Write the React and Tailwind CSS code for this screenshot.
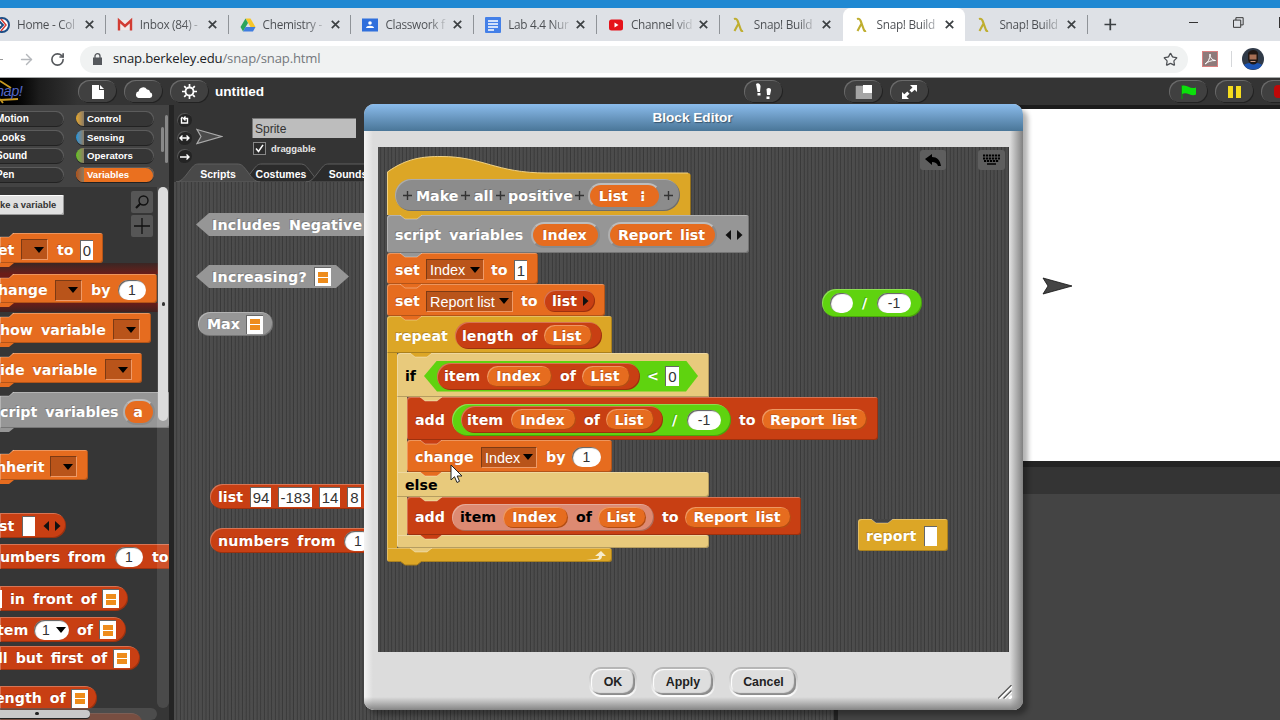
import clsx from "clsx";
import { Star, RotateCw, ArrowRight } from "lucide-react";

const stripes =
  "bg-[repeating-linear-gradient(90deg,#4d4d4d_0,#4b4b4b_2px,#393939_2.7px,#3e3e3e_3.1px,#4d4d4d_3.65px)]";
const bevel =
  "shadow-[inset_1px_1px_0_rgba(255,255,255,0.28),inset_-1px_-1px_0_rgba(0,0,0,0.22)]";

/* ---------- block parts ---------- */

function Word({ className, dark, children }) {
  return (
    <span
      className={clsx(
        "shrink-0 whitespace-nowrap font-['DejaVu_Sans',sans-serif] text-[14.2px] leading-[16px] font-bold [word-spacing:3px]",
        dark ? "text-black" : "text-white [text-shadow:-1px_-1px_0_rgba(0,0,0,0.18)]",
        className
      )}
    >
      {children}
    </span>
  );
}

function Var({ className, ring, children }) {
  return (
    <span
      className={clsx(
        "flex shrink-0 items-center rounded-full bg-[#e66c1f] pr-[2px]",
        ring
          ? "h-[26px] border-[2px] border-[#8a8a8a] border-t-[#bdbdbd] border-l-[#b0b0b0]"
          : "h-[21px] shadow-[inset_1px_1px_0_rgba(255,255,255,0.3),inset_-1px_-1px_0_rgba(100,30,0,0.4)]",
        className
      )}
    >
      <Word className="mx-auto">{children}</Word>
    </span>
  );
}

function Pill({ className, children }) {
  return <span className={clsx("flex shrink-0 items-center rounded-full", bevel, className)}>{children}</span>;
}

function Num({ className, children }) {
  return (
    <span
      className={clsx(
        "flex h-[20px] shrink-0 items-center justify-center rounded-full bg-white font-['Liberation_Sans',sans-serif] text-[14px] leading-none text-[#333] shadow-[inset_1px_1px_1px_rgba(0,0,0,0.65)]",
        className
      )}
    >
      {children}
    </span>
  );
}

function Slot({ className, children }) {
  return (
    <span
      className={clsx(
        "flex h-[20px] shrink-0 items-center justify-center border-t border-l border-black/60 bg-white font-['Liberation_Sans',sans-serif] text-[15px] leading-none text-[#333]",
        className
      )}
    >
      {children}
    </span>
  );
}

function Down() {
  return (
    <svg className="mr-[3px] ml-auto h-[6px] w-[10px] shrink-0" viewBox="0 0 10 6">
      <path d="M0 0h10L5 6z" fill="#000" />
    </svg>
  );
}

function Dropdown({ className, children }) {
  return (
    <span
      className={clsx(
        "flex h-[21px] shrink-0 items-center border border-t-[#7c3a14] border-r-[#ee9a68] border-b-[#ee9a68] border-l-[#7c3a14] bg-[#b9541a] pl-[3px] font-['Liberation_Sans',sans-serif] text-[14.4px] leading-none text-white",
        className
      )}
    >
      <span className="pt-[2px] whitespace-nowrap">{children}</span>
      <Down />
    </span>
  );
}

function ListSlot({ className }) {
  return (
    <span
      className={clsx(
        "flex h-[19px] w-[17px] shrink-0 flex-col items-center justify-center gap-px border-t border-l border-black/60 bg-white",
        className
      )}
    >
      <i className="h-[5px] w-[10px] bg-[#ee8c1c]" />
      <i className="h-[5px] w-[10px] bg-[#ee8c1c]" />
    </span>
  );
}

function Arrows({ className, single }) {
  return (
    <svg className={clsx("h-[10px] w-[18px] shrink-0", className)} viewBox="0 0 18 10">
      {!single && <path d="M6 0v10L0.500 5z" fill="#111" />}
      <path d={single ? "M0 0v10l5.500-5z" : "M12 0v10l5.500-5z"} fill="#111" />
    </svg>
  );
}

// the tab of the block above, hanging into the top of the next one
function Tab({ fill, edge = "rgba(255,255,255,0.35)", className }) {
  return (
    <svg className={clsx("absolute h-[6px] w-[22px]", className || "top-0 left-[13px]")} viewBox="0 0 22 6">
      <path d="M0 0h22l-5 4H5z" fill={fill} />
      <path d="M0 0l5 4h12l5-4" fill="none" stroke={edge} strokeWidth="1" />
    </svg>
  );
}

function Row({ className, children }) {
  return (
    <div className={clsx("relative flex shrink-0 items-center rounded-[3px] pt-[2px] pl-[8px]", bevel, className)}>
      {children}
    </div>
  );
}

/* ---------- browser ---------- */

function Lambda() {
  return (
    <svg className="h-[16px] w-[16px]" viewBox="0 0 16 16">
      <path d="M3 2c2-.8 3 .2 3.700 2l3.300 9c.4 1 1 1.200 2 .7M7.500 6.500L3.500 14" fill="none" stroke="#bfae30" strokeWidth="2.100" />
    </svg>
  );
}

const favicons = {
  home: (
    <svg className="h-[16px] w-[16px]" viewBox="0 0 16 16">
      <circle cx="8" cy="8" r="7" fill="#fff" stroke="#1d4e86" strokeWidth="2" />
      <path d="M7 2l5 6-5 6" fill="none" stroke="#d43c34" strokeWidth="1.500" />
      <path d="M4 3l5 5-5 5" fill="none" stroke="#1d4e86" strokeWidth="2" />
    </svg>
  ),
  gmail: (
    <svg className="h-[16px] w-[16px]" viewBox="0 0 16 16">
      <path d="M2 3h12v10H2z" fill="#f1e9e8" />
      <path d="M2 13.500V3.500l6 5.500 6-5.500v10" fill="none" stroke="#d23c32" strokeWidth="2.400" />
    </svg>
  ),
  drive: (
    <svg className="h-[16px] w-[16px]" viewBox="0 0 16 16">
      <path d="M5.500 1.500h5L15.500 10h-5z" fill="#f6c62b" />
      <path d="M5.500 1.500L8 6 3 14.500.5 10z" fill="#2ba45c" />
      <path d="M5.500 10h10L13 14.500H3z" fill="#3f7de0" />
    </svg>
  ),
  classroom: (
    <svg className="h-[16px] w-[16px]" viewBox="0 0 16 16">
      <path d="M0 1.500h16v13H0z" fill="#2f6fdc" />
      <circle cx="8" cy="6" r="1.800" fill="#fff" />
      <path d="M4 11c0-3 8-3 8 0z" fill="#fff" />
    </svg>
  ),
  docs: (
    <svg className="h-[16px] w-[16px]" viewBox="0 0 16 16">
      <rect width="16" height="16" rx="1" fill="#4480e8" />
      <path d="M3 4h10M3 7h10M3 10h10M3 13h6" stroke="#fff" strokeWidth="1.500" />
    </svg>
  ),
  youtube: (
    <svg className="h-[16px] w-[16px]" viewBox="0 0 16 16">
      <rect x="1" y="2.500" width="14" height="11" rx="2.500" fill="#e5131a" />
      <path d="M6.500 5.500v5l4-2.500z" fill="#fff" />
    </svg>
  ),
  snap: <Lambda />,
};

const tabs = [
  { icon: "home", title: "Home - Col" },
  { icon: "gmail", title: "Inbox (84) -" },
  { icon: "drive", title: "Chemistry -" },
  { icon: "classroom", title: "Classwork f" },
  { icon: "docs", title: "Lab 4.4 Nur" },
  { icon: "youtube", title: "Channel vid" },
  { icon: "snap", title: "Snap! Build" },
  { icon: "snap", title: "Snap! Build", active: true },
  { icon: "snap", title: "Snap! Build" },
];

function ChromeTab({ tab, sep }) {
  return (
    <div className={clsx("flex h-[33px] w-[122.800px] shrink-0 items-center", tab.active && "rounded-t-[8px] bg-white")}>
      <span className="ml-[11px] shrink-0">{favicons[tab.icon]}</span>
      <span className="ml-[7px] w-[61px] overflow-hidden bg-linear-to-r from-[#4a4d51] from-70% to-[#c5c8cc] bg-clip-text font-['Open_Sans',sans-serif] text-[11.800px] tracking-[-0.3px] whitespace-nowrap text-transparent">
        {tab.title}
      </span>
      <svg className="ml-[7px] h-[9px] w-[9px] shrink-0" viewBox="0 0 9 9">
        <path d="M0.800 0.800l7.400 7.400M8.200 0.800L0.800 8.200" stroke="#3c4043" strokeWidth="1.700" />
      </svg>
      {sep && <i className="ml-auto h-[19px] w-px bg-[#8f9398]" />}
    </div>
  );
}

function Chrome() {
  return (
    <div className="shrink-0">
      <div className="h-[8px] bg-[#1f88d2]" />
      <div className="flex h-[33px] items-center bg-[#dee1e6]">
        <div className="-ml-[17px] flex">
          {tabs.map((t, i) => (
            <ChromeTab key={i} tab={t} sep={i !== 6 && i !== 7} />
          ))}
        </div>
        <svg className="ml-[16px] h-[13px] w-[13px]" viewBox="0 0 13 13">
          <path d="M6.500 0.500v12M0.500 6.500h12" stroke="#3c4043" strokeWidth="1.800" />
        </svg>
        <i className="mb-[4px] ml-[72px] h-px w-[10px] bg-[#333]" />
        <svg className="mb-[5px] ml-[35px] h-[11px] w-[11px]" viewBox="0 0 11 11" fill="none" stroke="#333">
          <path d="M.5 3h7.500v7.500H.5zM3 3V.5h7.500V8H8" />
        </svg>
        <i className="mb-[5px] ml-[35px] h-[11px] w-px bg-[#333]" />
      </div>
      <div className="flex h-[36px] items-center bg-white">
        <i className="h-px w-[3px] bg-[#999]" />
        <ArrowRight className="ml-[15px] text-[#b4b7bb]" size={17} strokeWidth={2} />
        <RotateCw className="ml-[15px] text-[#55585c]" size={15} strokeWidth={2.600} />
        <div className="ml-[15px] flex h-[27px] w-[1108px] items-center rounded-full bg-[#f0f2f2] pl-[13px] font-['Open_Sans',sans-serif] text-[13.100px] tracking-[-0.15px] text-[#202124]">
          <svg className="mr-[11px] h-[12px] w-[9px]" viewBox="0 0 9 12">
            <path d="M0 4.500h9V12H0z" fill="#55585c" />
            <path d="M2 5V3a2.500 2.300 0 0 1 5 0v2" fill="none" stroke="#55585c" strokeWidth="1.300" />
          </svg>
          snap.berkeley.edu<span className="text-[#74787c]">/snap/snap.html</span>
          <Star size={15} className="mr-[10px] ml-auto text-[#4d5054]" />
        </div>
        <div className="ml-[14px] flex h-[16px] w-[16px] items-center justify-center border border-[#d98080] bg-[#8e7a7a]">
          <svg className="h-[12px] w-[12px]" viewBox="0 0 12 12">
            <path d="M1 11c3-1.500 5-5 5-10 0 4 2 6 5.500 6.500C7 7.500 4 8.500 1 11z" fill="none" stroke="#fff" />
          </svg>
        </div>
        <i className="ml-[13px] h-[16px] w-px bg-[#d5d7da]" />
        <svg className="ml-[10px] h-[22px] w-[22px]" viewBox="0 0 22 22">
          <circle cx="11" cy="11" r="11" fill="#303a48" />
          <path d="M2 17c3-3 15-3 18 0-3 6-15 6-18 0z" fill="#1c55b5" />
          <path d="M6 5c2-4 9-4 10 0v7c-1 6-8 6-10 0z" fill="#211815" />
          <path d="M7.500 6.500h7v5h-7z" fill="#a86f55" />
          <path d="M8.500 13.500h5" stroke="#c79a86" />
        </svg>
      </div>
      <div className="h-px bg-[#a5a8a8]" />
    </div>
  );
}

/* ---------- Snap! IDE ---------- */

function BarButton({ className, children }) {
  return (
    <div
      className={clsx(
        "flex h-[23px] w-[39px] shrink-0 items-center justify-center rounded-full bg-[#404040] shadow-[inset_1px_1px_0_#6a6a6a,inset_-1px_-1px_0_#222]",
        className
      )}
    >
      {children}
    </div>
  );
}

function ControlBar() {
  return (
    <div className="flex h-[27px] shrink-0 items-center bg-[#343434]">
      <div className="flex h-full w-[78px] shrink-0 items-center bg-linear-to-r from-black via-[#1c1c1c] to-[#343434]">
        <svg className="h-[27px] w-[24px]" viewBox="0 0 24 27">
          <path d="M0 3l11 7M0 22l18-1M3 25l-3-4" fill="none" stroke="#c99a22" strokeWidth="1.800" />
          <text x="-4" y="18" fontSize="14.500" fontFamily="Liberation Sans" fontStyle="italic" letterSpacing="-0.500" fill="#5367c4">
            nap!
          </text>
        </svg>
      </div>
      <BarButton>
        <svg className="h-[14px] w-[12px]" viewBox="0 0 12 14">
          <path d="M0 0h7v5h5v9H0zM8 0l4 4H8z" fill="#fff" />
        </svg>
      </BarButton>
      <BarButton className="ml-[7px]">
        <svg className="h-[12px] w-[18px]" viewBox="0 0 18 12">
          <path d="M3.500 12a3.500 3.500 0 0 1 .2-6.800A4.500 4.500 0 0 1 12 3.500 3 3 0 0 1 15 6.300 2.900 2.900 0 0 1 14.800 12z" fill="#fff" />
        </svg>
      </BarButton>
      <BarButton className="ml-[7px]">
        <svg className="h-[15px] w-[15px]" viewBox="0 0 15 15" fill="none" stroke="#fff">
          <circle cx="7.500" cy="7.500" r="4" strokeWidth="1.800" />
          <path d="M7.500 0v3M7.500 12v3M0 7.500h3M12 7.500h3M2.200 2.200l2 2M10.800 10.800l2 2M2.200 12.800l2-2M10.800 4.200l2-2" strokeWidth="1.700" />
        </svg>
      </BarButton>
      <span className="ml-[6px] w-[52px] shrink-0 pt-[2px] font-['Liberation_Sans',sans-serif] text-[13.600px] font-bold text-white">untitled</span>
      <BarButton className="ml-[477px]">
        <svg className="h-[17px] w-[18px]" viewBox="0 0 18 17" fill="#fff">
          <path d="M1 1c2-2 5 0 4.500 3L5 9H2.500zM2.500 10h3v2.500h-3zM11.500 6c2-2 5-1 4.500 1.500L15 12h-3zM11.500 13.500h3V16h-3z" />
        </svg>
      </BarButton>
      <BarButton className="ml-[61px]">
        <svg className="h-[14px] w-[17px]" viewBox="0 0 17 14">
          <path d="M0 0h17v14H0z" fill="#a5a5a5" />
          <path d="M8 0h9v8H8z" fill="#fff" />
          <path d="M0 14V0h8" fill="none" stroke="#111" />
        </svg>
      </BarButton>
      <BarButton className="ml-[7px]">
        <svg className="h-[14px] w-[15px]" viewBox="0 0 15 14" fill="#fff">
          <path d="M8 0h7v7l-2.300-2.200-3 2.700L7.500 5.200l3-2.800zM7 14H0V7l2.300 2.200 3-2.700 2.200 2.300-3 2.800z" />
        </svg>
      </BarButton>
      <BarButton className="ml-[240px]">
        <svg className="h-[14px] w-[16px]" viewBox="0 0 16 14">
          <path d="M1 0v14" stroke="#00a000" />
          <path d="M1 1c5-2 8 4 14 1.500v7C10 12 6 6 1 9z" fill="#0be00b" />
        </svg>
      </BarButton>
      <BarButton className="ml-[7px]">
        <i className="h-[12px] w-[5px] bg-[#f5dc1e]" />
        <i className="ml-[3px] h-[12px] w-[5px] bg-[#f5dc1e]" />
      </BarButton>
      <BarButton className="ml-[7px]">
        <i className="h-[13px] w-[13px] rounded-[4px] bg-[#c00808]" />
      </BarButton>
    </div>
  );
}

const leftCats = ["Motion", "Looks", "Sound", "Pen"];
const rightCats = [
  { name: "Control", edge: "from-[#e6a822]" },
  { name: "Sensing", edge: "from-[#0494dc]" },
  { name: "Operators", edge: "from-[#62c213]" },
  { name: "Variables", edge: "from-[#a85018]", active: true },
];

function Categories() {
  return (
    <div className="flex h-[82px] shrink-0 bg-[#434343] pt-[6px] font-['Liberation_Sans',sans-serif] text-[10px] leading-[15px] font-bold text-white">
      <div className="flex w-[64px] flex-col gap-[3.700px]">
        {leftCats.map((c) => (
          <div key={c} className="h-[15px] rounded-r-full bg-[#363636] shadow-[inset_-1px_1px_0_#5c5c5c,0_1px_0_#222]">
            <span className="-ml-[4px]">{c}</span>
          </div>
        ))}
      </div>
      <div className="ml-[12px] flex w-[78px] flex-col gap-[3.700px]">
        {rightCats.map((c) => (
          <div
            key={c.name}
            className={clsx(
              "flex h-[15px] overflow-hidden rounded-full shadow-[inset_-1px_1px_0_#5c5c5c,0_1px_0_#222]",
              c.active ? "bg-[#ea701f]" : "bg-[#363636]"
            )}
          >
            <i className={clsx("w-[8px] bg-linear-to-r to-[#8a7a60]", c.edge)} />
            <span className="ml-[3px] text-[9.600px]">{c.name}</span>
          </div>
        ))}
      </div>
      <i className="mt-[16px] ml-[7px] h-[25px] w-[3px] rounded bg-[#888]" />
      <i className="mt-[4px] ml-[1px] h-[48px] w-[3px] rounded bg-[#888]" />
    </div>
  );
}

// palette commands run off the left edge, so only the right half of the notch shows
function PaletteCommand({ className, fill, gap = "#363636", children }) {
  return (
    <div className={clsx("relative flex shrink-0 items-center rounded-r-[3px] pt-[3px]", bevel, className)}>
      <svg className="absolute -top-px left-0 h-[6px] w-[14px]" viewBox="0 0 14 6">
        <path d="M0 0h14l-5 5H0z" fill={gap} />
        <path d="M0 5h9l5-4" fill="none" stroke="rgba(255,255,255,0.3)" />
      </svg>
      <svg className="absolute top-full left-0 z-10 h-[5px] w-[14px]" viewBox="0 0 14 5">
        <path d="M0 0h14l-5 4H0z" fill={fill} />
      </svg>
      {children}
    </div>
  );
}

function Palette() {
  return (
    <div className="relative flex h-[533px] flex-col items-start overflow-hidden bg-[#363636]">
      <div className="mt-[8px] flex h-[20px] w-[64px] shrink-0 items-center rounded-r-[2px] bg-[#e0e0e0] font-['Liberation_Sans',sans-serif] text-[9.400px] font-bold text-[#333] shadow-[inset_-1px_-1px_0_#999,inset_0_1px_0_#fff]">
        <span className="pt-[1px] whitespace-nowrap">ke a variable</span>
      </div>
      <PaletteCommand fill="#e66c1f" className="mt-[18px] h-[30px] w-[103px] bg-[#e66c1f]">
        <Word className="-ml-[2px] w-[23px]">et</Word>
        <Dropdown className="w-[27px]" />
        <Word className="ml-[9px] w-[15px]">to</Word>
        <Slot className="ml-[8px] w-[13px]">0</Slot>
      </PaletteCommand>
      <div className="h-[11px] w-[158px] shrink-0 bg-linear-to-b from-[#3a2624] to-[#6a1c18]" />
      <PaletteCommand fill="#e66c1f" gap="#6a1c18" className="h-[29px] w-[157px] bg-[#e66c1f]">
        <Word className="-ml-[2px] w-[57px]">hange</Word>
        <Dropdown className="w-[27px]" />
        <Word className="ml-[9px] w-[19px]">by</Word>
        <Num className="ml-[8px] w-[28px]">1</Num>
      </PaletteCommand>
      <div className="h-[9px] w-[158px] shrink-0 bg-linear-to-b from-[#6a1c18] to-[#40201e]" />
      <PaletteCommand fill="#e66c1f" className="mt-px h-[30px] w-[151px] bg-[#e66c1f]">
        <Word className="w-[113px]">how variable</Word>
        <Dropdown className="w-[27px]" />
      </PaletteCommand>
      <PaletteCommand fill="#e66c1f" className="mt-[10px] h-[30px] w-[142px] bg-[#e66c1f]">
        <Word className="w-[105px]">ide variable</Word>
        <Dropdown className="w-[27px]" />
      </PaletteCommand>
      <PaletteCommand fill="#969696" className="mt-[9px] h-[36px] w-[170px] bg-[#969696]">
        <Word className="w-[123px]">cript variables</Word>
        <Var ring className="w-[32px]">a</Var>
      </PaletteCommand>
      <PaletteCommand fill="#e66c1f" className="mt-[22px] h-[30px] w-[88px] bg-[#e66c1f]">
        <Word className="-ml-[4px] w-[54px]">nherit</Word>
        <Dropdown className="w-[27px]" />
      </PaletteCommand>
      <Pill className="mt-[33px] h-[25px] w-[66px] rounded-l-none bg-[#c83f13]">
        <Word className="-ml-px w-[23px]">st</Word>
        <Slot className="w-[13px]" />
        <Arrows className="ml-[8px]" />
      </Pill>
      <Pill className="mt-[6px] h-[25px] w-[180px] rounded-none bg-[#c83f13]">
        <Word className="w-[115px]">umbers from</Word>
        <Num className="w-[28px]">1</Num>
        <Word className="ml-[9px]">to</Word>
      </Pill>
      <Pill className="mt-[17px] h-[25px] w-[128px] rounded-l-none bg-[#c83f13]">
        <i className="h-[18px] w-[2px] bg-white" />
        <Word className="ml-[8px] w-[92px]">in front of</Word>
        <ListSlot />
      </Pill>
      <Pill className="mt-[6px] h-[25px] w-[126px] rounded-l-none bg-[#c83f13]">
        <Word className="-ml-[3px] w-[37px]">tem</Word>
        <Num className="w-[35px] pl-[8px]">
          1<Down />
        </Num>
        <Word className="ml-[8px] w-[22px]">of</Word>
        <ListSlot />
      </Pill>
      <Pill className="mt-[4px] h-[24px] w-[140px] rounded-l-none bg-[#c83f13]">
        <Word className="-ml-[2px] w-[115px]">ll but first of</Word>
        <ListSlot />
      </Pill>
      <Pill className="mt-[16px] h-[24px] w-[97px] rounded-l-none bg-[#c83f13]">
        <Word className="-ml-[5px] w-[76px]">ength of</Word>
        <ListSlot />
      </Pill>
      <Pill className="mt-[3px] h-[24px] w-[143px] rounded-l-none bg-[#c83f13]" />

      <div className="absolute top-0 right-0 h-[521px] w-[12px] rounded-b-full bg-white/10" />
      <div className="absolute top-0 right-[1px] h-[234px] w-[10px] rounded-full bg-[#dcdcdc]" />
      <i className="absolute top-[115px] right-[4px] h-[4px] w-[3px] rounded-full bg-[#333]" />
      <div className="absolute top-[521px] left-0 h-[12px] w-[157px] rounded-r-full bg-[#555]/70" />
      <div className="absolute top-[523px] left-0 h-[8px] w-[90px] rounded-r-full bg-[#c9c9c9] shadow-[0_1px_0_#222]" />
      <i className="absolute top-[525px] left-[35px] h-[3px] w-[4px] rounded-full bg-[#222]" />
      <div className="absolute top-[4px] left-[131px] flex h-[22px] w-[22px] items-center justify-center rounded-[2px] bg-[#565656]">
        <svg className="h-[14px] w-[14px]" viewBox="0 0 14 14" fill="none" stroke="#111">
          <circle cx="8.500" cy="5.500" r="4.500" strokeWidth="1.400" />
          <path d="M5.500 8.500L1 13" strokeWidth="2.200" />
        </svg>
      </div>
      <div className="absolute top-[28px] left-[131px] flex h-[22px] w-[22px] items-center justify-center rounded-[2px] bg-[#565656]">
        <svg className="h-[16px] w-[16px]" viewBox="0 0 16 16">
          <path d="M8 0v16M0 8h16" stroke="#111" strokeWidth="1.300" />
        </svg>
      </div>
    </div>
  );
}

function RoundButton({ children }) {
  return (
    <div className="flex h-[15px] w-[15px] items-center justify-center rounded-full bg-[#242424] shadow-[inset_1px_1px_0_#555]">
      <svg className="h-[10px] w-[11px]" viewBox="0 0 11 10" fill="none" stroke="#fff" strokeWidth="1.400">
        {children}
      </svg>
    </div>
  );
}

function SpriteBar() {
  return (
    <div className="flex h-[58px] shrink-0 bg-[#343434] font-['Liberation_Sans',sans-serif]">
      <div className="mt-[8px] ml-[3px] flex flex-col gap-[4px]">
        <RoundButton>
          <path d="M3.500 2L2 4M2.500 4v4h6V3.500H5M6.500 1.500l-2 2 2 2" />
        </RoundButton>
        <RoundButton>
          <path d="M1 5h9M3.500 2.500L1 5l2.500 2.500M7.500 2.500L10 5 7.500 7.500" />
        </RoundButton>
        <RoundButton>
          <path d="M1 6h9M7.500 3.500L10 6 7.500 8.500" />
        </RoundButton>
      </div>
      <svg className="mt-[23px] ml-[4px] h-[18px] w-[27px]" viewBox="0 0 27 18">
        <path d="M1 1.500l24.500 7L1 15.500l4-7z" fill="#4b4b4b" stroke="#aaa" strokeWidth="1.200" />
      </svg>
      <div className="ml-[29px] pt-[13px]">
        <div className="h-[20px] w-[104px] border-t border-l border-[#777] bg-[#bdbdbd] pl-[2px] text-[12px] leading-[20px] text-[#333]">
          Sprite
        </div>
        <div className="mt-[4px] flex items-center text-[10px] leading-[13px] font-bold text-[#e6e6e6]">
          <span className="ml-[1px] flex h-[13px] w-[13px] items-center justify-center border border-[#888] bg-[#2c2c2c]">
            <svg className="h-[9px] w-[9px]" viewBox="0 0 9 9">
              <path d="M1 4.500l2.500 3L8 .8" fill="none" stroke="#fff" strokeWidth="1.500" />
            </svg>
          </span>
          <span className="ml-[5px] text-[9.400px]">draggable</span>
        </div>
      </div>
    </div>
  );
}

function SpriteTab({ active, className, children }) {
  return (
    <div className={clsx("relative flex h-[19px] w-[84px] shrink-0 items-center justify-center pt-[4px]", className)}>
      <svg className="absolute inset-0 h-[19px] w-[84px]" viewBox="0 0 84 19">
        <path
          d="M0 19c6 0 10-7 14-12s5-6 9-6h38c5 0 6 2 10 7s7 11 13 11z"
          fill={active ? "#494949" : "#2b2b2b"}
          stroke="#5f5f5f"
        />
      </svg>
      <span className="relative">{children}</span>
    </div>
  );
}

function ScriptsPane() {
  return (
    <div className="flex w-[660px] shrink-0 flex-col bg-[#343434]">
      <SpriteBar />
      <div className="flex h-[19px] shrink-0 pl-[2px] font-['Liberation_Sans',sans-serif] text-[10.500px] font-bold text-white">
        <SpriteTab active className="z-10">Scripts</SpriteTab>
        <SpriteTab className="-ml-[21px]">Costumes</SpriteTab>
        <SpriteTab className="-ml-[17px]">Sounds</SpriteTab>
      </div>
      <div className={clsx("relative flex-1", stripes)}>
        <div className="absolute top-[31px] left-[22px] flex h-[23px] w-[200px] items-center bg-[#969696] pt-px pl-[16px] [clip-path:polygon(13px_0,100%_0,100%_100%,13px_100%,0_50%)]">
          <Word className="tracking-[0.220px]">Includes Negative</Word>
        </div>
        <div className="absolute top-[83px] left-[22px] flex h-[23px] w-[153px] items-center bg-[#969696] pl-[16px] [clip-path:polygon(13px_0,140px_0,100%_50%,140px_100%,13px_100%,0_50%)]">
          <Word className="w-[102px] tracking-[0.300px]">Increasing?</Word>
          <ListSlot />
        </div>
        <Pill className="absolute top-[130px] left-[24px] h-[24px] w-[75px] bg-[#969696] pl-[9px]">
          <Word className="w-[39px]">Max</Word>
          <ListSlot />
        </Pill>
        <Pill className="absolute top-[302px] left-[36px] h-[25px] w-[220px] bg-[#c83f13] pl-[8px]">
          <Word className="w-[32px]">list</Word>
          <Slot className="w-[21px]">94</Slot>
          <Slot className="ml-[7px] w-[34px]">-183</Slot>
          <Slot className="ml-[7px] w-[21px]">14</Slot>
          <Slot className="ml-[7px] w-[14px]">8</Slot>
        </Pill>
        <Pill className="absolute top-[346px] left-[36px] h-[25px] w-[220px] bg-[#c83f13] pl-[8px]">
          <Word className="w-[126px] tracking-[0.150px]">numbers from</Word>
          <Num className="w-[28px]">1</Num>
        </Pill>
      </div>
    </div>
  );
}

function StagePane() {
  return (
    <div className="flex flex-1 flex-col bg-[#444]">
      <div className="h-[4px] shrink-0 bg-[#1c1c1c]" />
      <div className="h-[352px] shrink-0 bg-white pt-[168px] pl-[204px]">
        <svg className="h-[18px] w-[32px]" viewBox="0 0 32 18">
          <path d="M1 1l29 8L1 17l5-8z" fill="#444" stroke="#111" strokeWidth="0.800" />
        </svg>
      </div>
      <div className="h-[6px] shrink-0 bg-[#242424]" />
      <div className="h-[27px] shrink-0 bg-[#343434]" />
    </div>
  );
}

/* ---------- block editor ---------- */

function Plus({ className }) {
  return (
    <svg className={clsx("h-[9px] w-[9px] shrink-0", className)} viewBox="0 0 9 9">
      <path d="M4.500 0v9M0 4.500h9" stroke="#333" strokeWidth="1.400" />
    </svg>
  );
}

function ItemOf({ dark, className }) {
  return (
    <>
      <Word dark={dark} className={className}>item</Word>
      <Var className="ml-[7px] w-[65px]">Index</Var>
      <Word dark={dark} className="ml-[8px] w-[16px]">of</Word>
      <Var className="ml-[6px] w-[48px]">List</Var>
    </>
  );
}

function IfElse() {
  return (
    <div className="flex flex-col items-start">
      <Row className="h-[44px] w-[312px] rounded-b-none bg-[#e8ca7c]">
        <Tab fill="#dca626" />
        <Word dark className="w-[19px]">if</Word>
        <span className="flex h-[31px] w-[274px] items-center bg-[#5fd30f] pl-[13px] [clip-path:polygon(13px_0,262px_0,100%_50%,262px_100%,13px_100%,0_50%)]">
          <Pill className="h-[27px] w-[203px] bg-[#c83f13] pl-[7px]">
            <ItemOf className="w-[36px]" />
          </Pill>
          <Word className="ml-[7px] w-[12px]">&lt;</Word>
          <Slot className="ml-[6px] w-[14px]">0</Slot>
        </span>
      </Row>
      <div className="flex">
        <div className="w-[10px] bg-[#e8ca7c] shadow-[inset_1px_0_0_rgba(255,255,255,0.3)]" />
        <div className="flex flex-col items-start">
          <Row className="h-[43px] w-[471px] bg-[#c83f13]">
            <Tab fill="#e8ca7c" />
            <Word className="w-[37px]">add</Word>
            <Pill className="h-[32px] w-[279px] bg-[#5fd30f] pl-[9px]">
              <Pill className="h-[27px] w-[202px] bg-[#c83f13] pl-[6px]">
                <ItemOf className="w-[37px]" />
              </Pill>
              <Word className="ml-[9px] w-[8px]">/</Word>
              <Num className="ml-[7px] w-[34px]">-1</Num>
            </Pill>
            <Word className="ml-[8px] w-[17px]">to</Word>
            <Var className="ml-[6px] w-[105px]">Report list</Var>
          </Row>
          <Row className="h-[32px] w-[205px] bg-[#e66c1f]">
            <Tab fill="#c83f13" />
            <Word className="w-[66px] tracking-[0.150px]">change</Word>
            <Dropdown className="w-[56px]">Index</Dropdown>
            <Word className="ml-[9px] w-[18px]">by</Word>
            <Num className="ml-[8px] w-[29px]">1</Num>
          </Row>
        </div>
      </div>
      <Row className="h-[25px] w-[312px] rounded-l-none bg-[#e8ca7c] pt-0">
        <Tab fill="#e66c1f" className="top-0 left-[23px]" />
        <Word dark className="-mt-px">else</Word>
      </Row>
      <div className="flex">
        <div className="w-[10px] bg-[#e8ca7c] shadow-[inset_1px_0_0_rgba(255,255,255,0.3)]" />
        <Row className="h-[38px] w-[394px] bg-[#c83f13]">
          <Tab fill="#e8ca7c" />
          <Word className="w-[37px]">add</Word>
          <Pill className="h-[27px] w-[202px] bg-[#dd8a72] pl-[8px]">
            <ItemOf dark className="w-[36px]" />
          </Pill>
          <Word className="ml-[8px] w-[17px]">to</Word>
          <Var className="ml-[6px] w-[106px]">Report list</Var>
        </Row>
      </div>
      <Row className="h-[13px] w-[312px] rounded-tl-none bg-[#e8ca7c]">
        <Tab fill="#c83f13" className="top-0 left-[23px]" />
      </Row>
    </div>
  );
}

function MainScript() {
  return (
    <div className="absolute top-[9px] left-[9px] flex flex-col items-start">
      <div className="relative h-[59px] w-[304px]">
        <svg className="absolute inset-0 h-[59px] w-[304px]" viewBox="0 0 304 59">
          <path d="M0 16C20 2 36 .5 54 .5 96 .5 108 17 160 17H301q2.500 0 2.500 2.500V59H0z" fill="#dca626" />
          <path d="M0.500 59V16C20 2 36 .5 54 .5 96 .5 108 17 160 17H301" fill="none" stroke="#f0d184" />
          <path d="M303.500 19V59" stroke="#93701c" />
        </svg>
        <div className="relative pt-[23px] pl-[8px]">
          <Pill className="h-[32px] w-[285px] bg-[#8c8c8c] pt-px pl-[8px]">
            <Plus />
            <Word className="ml-[4px] w-[44px]">Make</Word>
            <Plus className="ml-[1px]" />
            <Word className="ml-[4px] w-[20px]">all</Word>
            <Plus className="ml-[2px]" />
            <Word className="ml-[3px] w-[66px] tracking-[0.150px]">positive</Word>
            <Plus className="ml-[1px]" />
            <Var ring className="ml-[4px] w-[73px] pr-[5px]">
              List<span className="ml-[12px]">⁝</span>
            </Var>
            <Plus className="ml-[3px]" />
          </Pill>
        </div>
      </div>
      <Row className="h-[38px] w-[362px] bg-[#969696]">
        <Tab fill="#dca626" />
        <Word className="w-[136px] tracking-[0.080px]">script variables</Word>
        <Var ring className="w-[69px]">Index</Var>
        <Var ring className="ml-[8px] w-[109px]">Report list</Var>
        <Arrows className="ml-[8px]" />
      </Row>
      <Row className="h-[31px] w-[151px] bg-[#e66c1f]">
        <Tab fill="#969696" />
        <Word className="w-[31px]">set</Word>
        <Dropdown className="w-[58px]">Index</Dropdown>
        <Word className="ml-[7px] w-[16px]">to</Word>
        <Slot className="ml-[7px] w-[13px]">1</Slot>
      </Row>
      <Row className="h-[32px] w-[218px] bg-[#e66c1f]">
        <Tab fill="#e66c1f" />
        <Word className="w-[31px]">set</Word>
        <Dropdown className="w-[87px]">Report list</Dropdown>
        <Word className="ml-[8px] w-[16px]">to</Word>
        <Pill className="ml-[7px] h-[22px] w-[51px] bg-[#c83f13] pl-[8px]">
          <Word className="w-[31px]">list</Word>
          <Arrows single />
        </Pill>
      </Row>
      <Row className="h-[37px] w-[225px] rounded-b-none bg-[#dca626]">
        <Tab fill="#e66c1f" />
        <Word className="w-[60px]">repeat</Word>
        <Pill className="h-[27px] w-[147px] bg-[#c83f13] pl-[7px]">
          <Word className="w-[82px]">length of</Word>
          <Var className="w-[48px]">List</Var>
        </Pill>
      </Row>
      <div className="flex">
        <div className="w-[10px] bg-[#dca626] shadow-[inset_1px_0_0_rgba(255,255,255,0.3)]" />
        <IfElse />
      </div>
      <Row className="h-[14px] w-[225px] rounded-tl-none bg-[#dca626]">
        <Tab fill="#e8ca7c" className="top-0 left-[23px]" />
        <Tab fill="#dca626" edge="#a67c1c" className="top-[13px] left-[13px]" />
        <svg className="mr-[5px] ml-auto h-[10px] w-[21px]" viewBox="0 0 21 10">
          <path d="M0 9h12c3 0 4-2 4-4h4l-5-5-6 5h4c0 2-1 3-3 3z" fill="#f7eccb" />
        </svg>
      </Row>
    </div>
  );
}

function DialogButton({ className, children }) {
  return (
    <div className={clsx("h-[30px] shrink-0 rounded-[12px] bg-linear-to-b from-[#b4b4b4] to-white p-[2px]", className)}>
      <div className="flex h-full items-center justify-center rounded-[10px] bg-[#dedede] shadow-[inset_-2px_-2px_1px_#8c8c8c,inset_1px_1px_1px_#fff]">
        {children}
      </div>
    </div>
  );
}

function BlockEditor() {
  return (
    <div className="absolute top-[104px] left-[364px] flex h-[606px] w-[659px] flex-col overflow-hidden rounded-[10px] bg-[#dcdcdc] font-['Liberation_Sans',sans-serif] shadow-[5px_5px_5px_rgba(0,0,0,0.3)]">
      <div className="flex h-[27px] shrink-0 items-center justify-center bg-linear-to-b from-[#8bbcec] to-[#4a7698] pt-[2px] pr-[2px] text-[13.600px] font-bold text-white [text-shadow:1px_1px_1px_rgba(0,0,0,0.4)]">
        Block Editor
      </div>
      <div className="flex flex-1 flex-col bg-[linear-gradient(90deg,#f4f4f4_0,#dcdcdc_9px,#dcdcdc_646px,#808080_659px)]">
        <div className={clsx("relative mt-[16px] ml-[14px] h-[505px] w-[631px] shrink-0", stripes)}>
          <MainScript />
          <Pill className="absolute top-[142px] left-[444px] h-[28px] w-[100px] bg-[#5fd30f] pl-[8px]">
            <Num className="w-[23px]" />
            <Word className="ml-[9px] w-[8px]">/</Word>
            <Num className="ml-[7px] w-[34px]">-1</Num>
          </Pill>
          <Row className="absolute! top-[372px] left-[480px] h-[32px] w-[90px] bg-[#dca626]">
            <Tab fill="#444444" />
            <Word className="w-[58px]">report</Word>
            <Slot className="w-[13px]" />
          </Row>
          <div className="absolute top-[3px] left-[542px] flex h-[20px] w-[26px] items-center justify-center rounded-[3px] bg-[#5e5e5e]">
            <svg className="h-[12px] w-[16px]" viewBox="0 0 16 12">
              <path d="M0 5l7-5v3c5 0 8 3 9 9h-3c-1-3-3-4-6-4v3z" fill="#000" />
            </svg>
          </div>
          <div className="absolute top-[3px] left-[600px] flex h-[20px] w-[27px] items-center justify-center rounded-[3px] bg-[#5e5e5e]">
            <svg className="mb-[2px] h-[11px] w-[17px]" viewBox="0 0 17 11">
              <path d="M0 1.500h17M0 4.500h17M1 7h15" stroke="#000" strokeWidth="2" strokeDasharray="2.200 0.800" />
              <path d="M4 10h9" stroke="#000" strokeWidth="1.600" />
            </svg>
          </div>
        </div>
        <div className="relative flex flex-1 pt-[15px] pl-[225px] text-[12.400px] font-bold text-[#222]">
          <DialogButton className="w-[48px]">OK</DialogButton>
          <DialogButton className="ml-[14px] w-[64px]">Apply</DialogButton>
          <DialogButton className="ml-[14px] w-[69px]">Cancel</DialogButton>
          <div className="absolute bottom-0 left-0 h-[13px] w-[659px] bg-linear-to-b from-[#dcdcdc]/0 to-[#858585]" />
          <svg className="absolute right-[11px] bottom-[11px] h-[14px] w-[14px]" viewBox="0 0 14 14">
            <path d="M1 14L14 1M6 14l8-8M11 14l3-3" stroke="#fff" strokeWidth="2.500" />
            <path d="M0 13.500L13.500 0M5.500 13.500l8-8" stroke="#555" strokeWidth="1.300" />
          </svg>
        </div>
      </div>
    </div>
  );
}

export default function App() {
  return (
    <div className="relative flex h-[720px] w-[1280px] flex-col overflow-hidden bg-[#242424]">
      <Chrome />
      <ControlBar />
      <div className="flex flex-1">
        <div className="w-[169px] shrink-0">
          <Categories />
          <Palette />
        </div>
        <div className="w-[5px] shrink-0" />
        <ScriptsPane />
        <div className="w-[4px] shrink-0" />
        <StagePane />
      </div>
      <BlockEditor />
      <svg className="absolute top-[464px] left-[450px] h-[20px] w-[13px]" viewBox="0 0 13 20">
        <path d="M1 1v15l3.500-3.300L7 18.500l2.500-1.200L7.200 12H12z" fill="#fff" stroke="#222" />
      </svg>
    </div>
  );
}
